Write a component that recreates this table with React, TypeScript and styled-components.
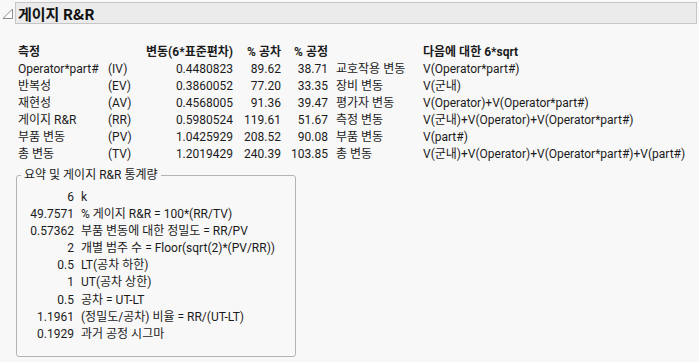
import { Fragment } from "react";
import styled, { createGlobalStyle } from "styled-components";

const GlobalStyle = createGlobalStyle`
  body {
    margin: 0;
    background: #f8f8f8;
    color: #1b1b1b;
    font-family: Roboto, "Noto Sans CJK KR", sans-serif;
    font-size: 12px;
  }
`;

const Page = styled.div`
  width: 699px;
  height: 362px;
  padding-top: 2px;
  box-sizing: border-box;
  overflow: hidden;
`;

const OutlineHeader = styled.div`
  display: flex;
  align-items: stretch;
  height: 22px;
  margin-right: 2px;
`;

const Toggle = styled.svg`
  width: 15px;
  flex: none;
  margin-top: 6px;
`;

const TitleBar = styled.div`
  flex: 1;
  display: flex;
  align-items: center;
  padding-left: 2px;
  background: #ebebeb;
  border: 1px solid #c6c6c6;
  font-family: "Noto Sans CJK KR", Roboto, sans-serif;
  font-size: 15px;
  font-weight: 700;
  color: #111;
`;

const Body = styled.div`
  padding: 19px 0 0 16px;
`;

const Report = styled.div`
  display: grid;
  grid-template-columns: 90px 32px 93px 48px 47px 95px auto;
  margin-left: 2px;
  white-space: nowrap;
`;

const Cell = styled.div<{ $right?: boolean; $head?: boolean; $pad?: boolean }>`
  line-height: ${(p) => (p.$head ? "18px" : "17px")};
  font-weight: ${(p) => (p.$head ? 700 : 400)};
  text-align: ${(p) => (p.$right ? "right" : "left")};
  justify-self: ${(p) => (p.$right ? "end" : "start")};
  padding-left: ${(p) => (p.$pad ? "8px" : "0")};
`;

const Group = styled.fieldset`
  width: 280px;
  box-sizing: border-box;
  margin: 4px 0 0 0;
  padding: 5px 4px 13px 4px;
  border: 1px solid #b4b4b4;
  border-radius: 3px;
`;

const Legend = styled.legend`
  padding: 0 3px;
  line-height: 17px;
`;

const Stats = styled.div`
  display: grid;
  grid-template-columns: 53px auto;
  column-gap: 7px;
  white-space: nowrap;
`;

const StatValue = styled.div`
  line-height: 17.1px;
  text-align: right;
`;

const StatLabel = styled.div`
  line-height: 17.1px;
`;

const rows = [
  ["Operator*part#", "(IV)", "0.4480823", "89.62", "38.71", "교호작용 변동", "V(Operator*part#)"],
  ["반복성", "(EV)", "0.3860052", "77.20", "33.35", "장비 변동", "V(군내)"],
  ["재현성", "(AV)", "0.4568005", "91.36", "39.47", "평가자 변동", "V(Operator)+V(Operator*part#)"],
  ["게이지 R&R", "(RR)", "0.5980524", "119.61", "51.67", "측정 변동", "V(군내)+V(Operator)+V(Operator*part#)"],
  ["부품 변동", "(PV)", "1.0425929", "208.52", "90.08", "부품 변동", "V(part#)"],
  ["총 변동", "(TV)", "1.2019429", "240.39", "103.85", "총 변동", "V(군내)+V(Operator)+V(Operator*part#)+V(part#)"],
];

const stats = [
  ["6", "k"],
  ["49.7571", "% 게이지 R&R = 100*(RR/TV)"],
  ["0.57362", "부품 변동에 대한 정밀도 = RR/PV"],
  ["2", "개별 범주 수 = Floor(sqrt(2)*(PV/RR))"],
  ["0.5", "LT(공차 하한)"],
  ["1", "UT(공차 상한)"],
  ["0.5", "공차 = UT-LT"],
  ["1.1961", "(정밀도/공차) 비율 = RR/(UT-LT)"],
  ["0.1929", "과거 공정 시그마"],
];

const rightCols = [2, 3, 4];

export default function App() {
  return (
    <Page>
      <GlobalStyle />
      <OutlineHeader>
        <Toggle viewBox="0 0 15 11" height="11">
          <polygon points="12.5,1 12.5,10.5 3,10.5" fill="#fff" stroke="#8a8a8a" strokeWidth="1" />
        </Toggle>
        <TitleBar>게이지 R&amp;R</TitleBar>
      </OutlineHeader>
      <Body>
        <Report>
          <Cell $head>측정</Cell>
          <Cell $head />
          <Cell $head $right>변동(6*표준편차)</Cell>
          <Cell $head $right>% 공차</Cell>
          <Cell $head $right>% 공정</Cell>
          <Cell $head $pad />
          <Cell $head>다음에 대한 6*sqrt</Cell>
          {rows.map((r) =>
            r.map((v, i) => (
              <Cell key={r[0] + i} $right={rightCols.includes(i)} $pad={i === 5}>
                {v}
              </Cell>
            ))
          )}
        </Report>
        <Group>
          <Legend>요약 및 게이지 R&amp;R 통계량</Legend>
          <Stats>
            {stats.map(([v, l]) => (
              <Fragment key={l}>
                <StatValue>{v}</StatValue>
                <StatLabel>{l}</StatLabel>
              </Fragment>
            ))}
          </Stats>
        </Group>
      </Body>
    </Page>
  );
}
